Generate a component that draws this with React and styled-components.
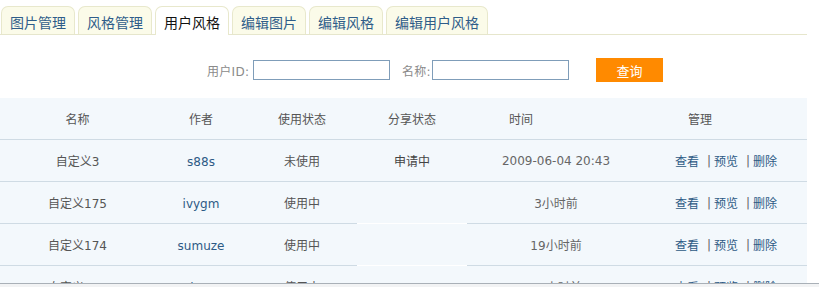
import React from "react";
import styled, { createGlobalStyle } from "styled-components";

const Global = createGlobalStyle`
  html, body { margin: 0; padding: 0; background: #fff; overflow: hidden; }
  body { font-family: "DejaVu Sans", "Noto Sans CJK SC", sans-serif; font-size: 12px; color: #555; }
`;

const Page = styled.div`
  width: 807px;
`;

const TabBar = styled.div`
  display: flex;
  align-items: flex-end;
  gap: 3px;
  padding: 5px 0 0 1px;
  border-bottom: 1px solid #e6e6cc;
  height: 29px;
`;

const Tab = styled.div`
  height: ${(p) => (p.$active ? "29px" : "28px")};
  margin-bottom: ${(p) => (p.$active ? "-1px" : "0")};
  padding: 2px 8px 0;
  box-sizing: border-box;
  display: flex;
  align-items: center;
  border: 1px solid #e8e8cc;
  border-bottom: none;
  border-radius: 7px 7px 0 0;
  background: ${(p) => (p.$active ? "#fff" : "#fbfbe9")};
  color: ${(p) => (p.$active ? "#111" : "#2f5d89")};
  font-family: "Noto Sans CJK SC", sans-serif;
  font-size: 14px;
  line-height: 1;
`;

const SearchBar = styled.div`
  height: 63px;
  box-sizing: border-box;
  padding: 7px 0 0 207px;
  display: flex;
  align-items: center;
`;

const Label = styled.label`
  color: #8a8a8a;
  font-size: 12px;
  width: ${(p) => p.$w}px;
  margin-left: ${(p) => p.$gap || 0}px;
  letter-spacing: 0.3px;
  white-space: nowrap;
`;

const Input = styled.input`
  width: 137px;
  height: 20px;
  box-sizing: border-box;
  border: 1px solid #7f9db9;
  margin: 0;
  padding: 0 2px;
  font-size: 12px;
`;

const Button = styled.button`
  margin-left: 27px;
  width: 67px;
  height: 24px;
  border: none;
  background: #ff8a00;
  color: #fff;
  font-family: "Noto Sans CJK SC", sans-serif;
  font-size: 13px;
  padding: 0;
`;

const Table = styled.div`
  background: #f3f8fc;
`;

const Row = styled.div`
  display: grid;
  grid-template-columns: ${(p) => p.$cols};
  height: 42px;
`;

const Cell = styled.div`
  display: flex;
  align-items: center;
  justify-content: center;
  border-bottom: 1px solid ${(p) => (p.$merged ? "#ffffff" : "#cfdbe4")};
  color: ${(p) => p.$color || "#555"};
  padding-left: ${(p) => p.$pl || 0}px;
  padding-top: ${(p) => p.$pt || 0}px;
  white-space: nowrap;
  font-size: 12px;
`;

const Link = styled.a`
  color: #2d5a85;
  text-decoration: none;
`;

const Sep = styled.span`
  color: #666;
  margin: 0 3px 0 8px;
`;

const Footer = styled.div`
  position: fixed;
  left: 0;
  right: 0;
  bottom: 0;
  height: 3px;
  border-top: 1px solid #a9b0b7;
  background: #f2f3f4;
`;

const DATA_COLS = "155px 92px 110px 110px 178px 162px";
const HEAD_COLS = "155px 92px 110px 110px 108px 1fr";

const rows = [
  { name: "自定义3", author: "s88s", use: "未使用", share: "申请中", time: "2009-06-04 20:43" },
  { name: "自定义175", author: "ivygm", use: "使用中", share: "", time: "3小时前", merged: true },
  { name: "自定义174", author: "sumuze", use: "使用中", share: "", time: "19小时前", merged: true },
  { name: "自定义173", author: "lmz", use: "使用中", share: "", time: "19小时前", merged: true },
];

const tabs = ["图片管理", "风格管理", "用户风格", "编辑图片", "编辑风格", "编辑用户风格"];

export default function App() {
  return (
    <Page>
      <Global />
      <TabBar>
        {tabs.map((t, i) => (
          <Tab key={t} $active={i === 2}>{t}</Tab>
        ))}
      </TabBar>
      <SearchBar>
        <Label $w={46}>用户ID:</Label>
        <Input />
        <Label $w={30} $gap={12}>名称:</Label>
        <Input />
        <Button>查询</Button>
      </SearchBar>
      <Table>
        <Row $cols={HEAD_COLS}>
          <Cell>名称</Cell>
          <Cell>作者</Cell>
          <Cell>使用状态</Cell>
          <Cell>分享状态</Cell>
          <Cell>时间</Cell>
          <Cell $pl={18}>管理</Cell>
        </Row>
        {rows.map((r) => (
          <Row key={r.name} $cols={DATA_COLS}>
            <Cell>{r.name}</Cell>
            <Cell $pt={3}><Link href="#">{r.author}</Link></Cell>
            <Cell>{r.use}</Cell>
            <Cell $merged={r.merged} $color="#444">{r.share}</Cell>
            <Cell $color="#666">{r.time}</Cell>
            <Cell>
              <Link href="#">查看</Link>
              <Sep>|</Sep>
              <Link href="#">预览</Link>
              <Sep>|</Sep>
              <Link href="#">删除</Link>
            </Cell>
          </Row>
        ))}
      </Table>
      <Footer />
    </Page>
  );
}
